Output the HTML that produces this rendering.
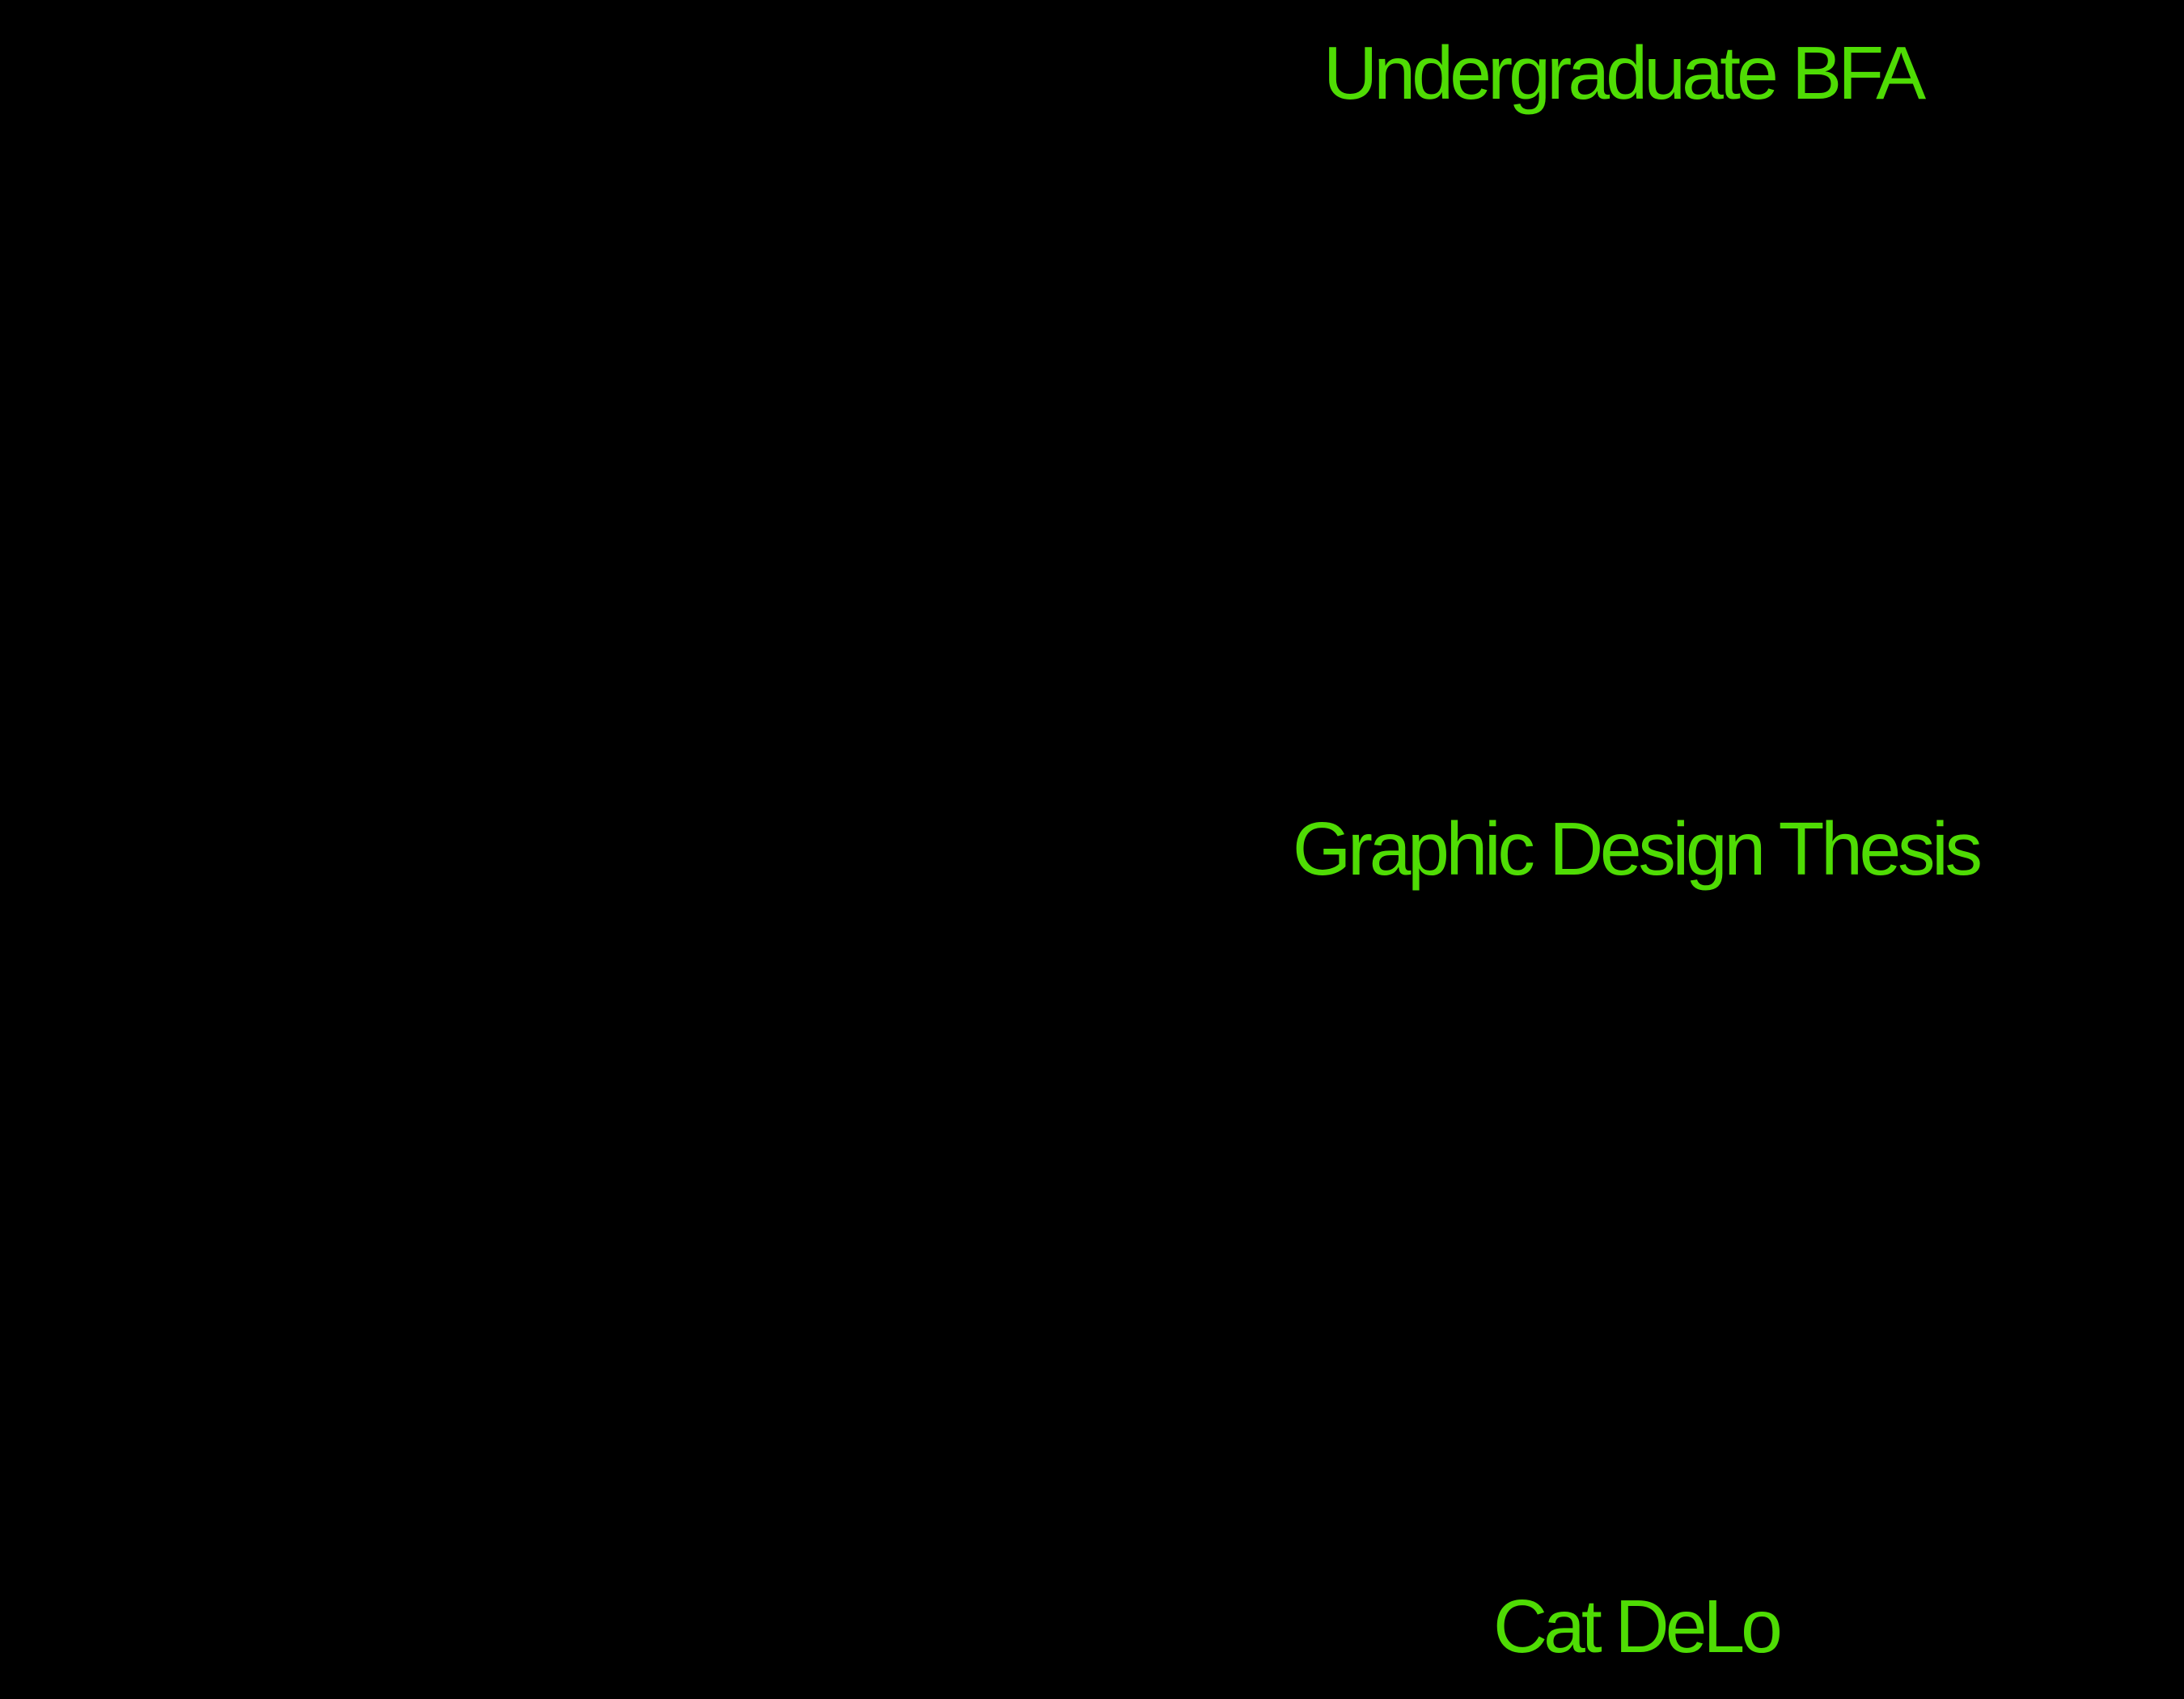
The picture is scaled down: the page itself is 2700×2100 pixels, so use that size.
<!DOCTYPE html>
<html><head><meta charset="utf-8"><style>
html,body{margin:0;padding:0;background:#000;}
body{width:2700px;height:2100px;position:relative;overflow:hidden;}
.t{position:absolute;font-family:"Liberation Sans",Arial,sans-serif;font-size:93px;line-height:93px;color:#4fdc04;white-space:nowrap;}
</style></head><body>
<div class="t" style="left:1636px;top:44px;letter-spacing:-4.8px;">Undergraduate BFA</div>
<div class="t" style="left:1598px;top:1003px;letter-spacing:-4.3px;">Graphic Design Thesis</div>
<div class="t" style="left:1846px;top:1964px;letter-spacing:-5px;">Cat DeLo</div>
</body></html>
